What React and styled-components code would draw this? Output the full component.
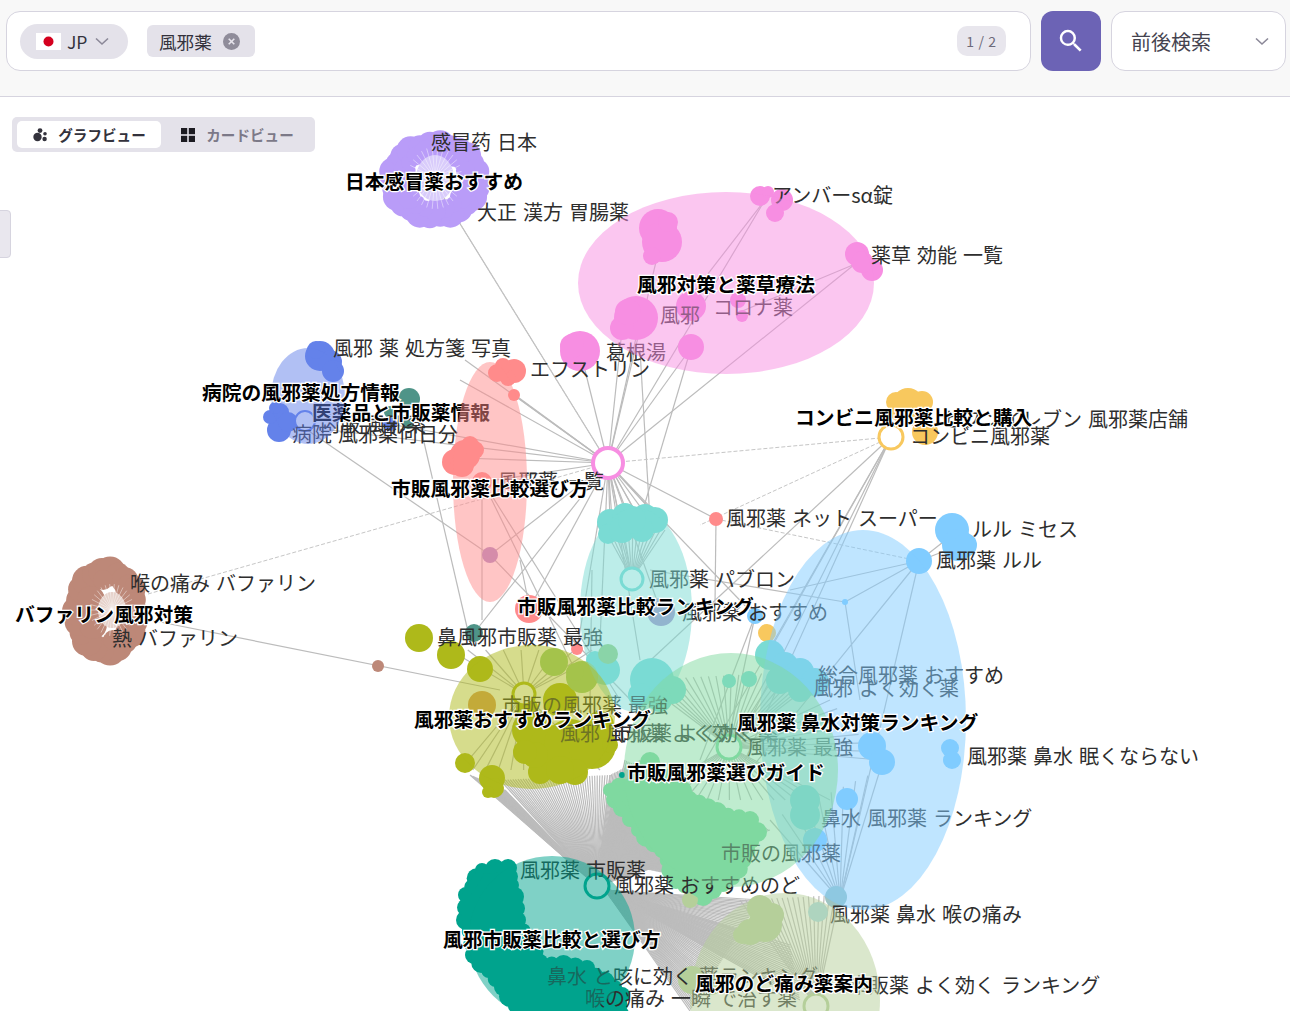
import React from "react";
import styled, { createGlobalStyle } from "styled-components";

const FONT = `"Noto Sans CJK JP", "Noto Sans", sans-serif`;

const GlobalStyle = createGlobalStyle`
  html, body { margin: 0; padding: 0; background: #fff; }
  body { font-family: ${FONT}; }
`;

// graph data, all in page coordinates
const COLORS = {
  pink: "#f78ee2",
  purple: "#b99cf8",
  salmon: "#ff8b8b",
  blue: "#6482ea",
  sky: "#80ccff",
  teal: "#7adbd4",
  dark: "#00a38d",
  olive: "#aeb91a",
  green: "#7fd9a0",
  sage: "#b5cf9a",
  brown: "#bd8878",
  yellow: "#f8c85e",
  slate: "#4f9488",
  violet: "#ab8cc8",
};

const HULLS = [
  { color: COLORS.pink, cx: 726, cy: 283, rx: 148, ry: 91 },
  { color: COLORS.salmon, cx: 490, cy: 482, rx: 37, ry: 120 },
  { color: COLORS.blue, cx: 308, cy: 396, rx: 37, ry: 48 },
  { color: COLORS.teal, cx: 636, cy: 610, rx: 56, ry: 102 },
  { color: COLORS.sky, cx: 863, cy: 720, rx: 103, ry: 190 },
  { color: COLORS.olive, cx: 532, cy: 717, rx: 83, ry: 72 },
  { color: COLORS.green, cx: 731, cy: 770, rx: 107, ry: 117 },
  { color: COLORS.dark, cx: 552, cy: 938, rx: 83, ry: 82 },
  { color: COLORS.sage, cx: 785, cy: 1000, rx: 95, ry: 107 },
];

const ring = (cx, cy, rx, ry, n, r) =>
  Array.from({ length: n }, (_, i) => {
    const a = (i / n) * Math.PI * 2;
    return [cx + Math.cos(a) * rx, cy + Math.sin(a) * ry, r + (i % 3) * 1.5];
  });

// lumps along a closed outline, gives the clusters their bumpy edge
const along = (pts, step, r) => {
  const out = [];
  pts.forEach(([x, y], i) => {
    const [nx, ny] = pts[(i + 1) % pts.length];
    const n = Math.max(1, Math.round(Math.hypot(nx - x, ny - y) / step));
    for (let k = 0; k < n; k++) {
      out.push([x + ((nx - x) * k) / n, y + ((ny - y) * k) / n, r + ((out.length * 7) % 4)]);
    }
  });
  return out;
};

const GREEN_OUTLINE = [
  [610, 790], [622, 808], [638, 830], [662, 850], [676, 880], [703, 896], [733, 878], [757, 832], [750, 820],
  [717, 812], [690, 798], [650, 762], [630, 785],
];
const DARK_OUTLINE = [
  [482, 870], [508, 868], [512, 885], [518, 920], [540, 962], [587, 968], [622, 995], [618, 1025], [527, 1025],
  [503, 987], [474, 955], [466, 920], [466, 895],
];

const BLOBS = [
  {
    color: COLORS.purple,
    dots: [...ring(435, 180, 43, 36, 26, 11), ...ring(435, 180, 32, 30, 20, 8)],
  },
  {
    color: COLORS.brown,
    dots: [...ring(106, 611, 29, 40, 22, 12), [91, 600, 14], [93, 625, 14], [103, 580, 10], [113, 640, 10], [128, 635, 8], [133, 585, 8]],
  },
  { color: COLORS.brown, dots: [[378, 666, 6]] },
  {
    color: COLORS.pink,
    dots: [
      [658, 228, 19], [662, 242, 20], [652, 256, 9], [668, 222, 10], [760, 196, 10], [782, 200, 11], [775, 213, 9], [768, 192, 6],
      [857, 254, 12], [872, 270, 11], [862, 262, 11], [636, 318, 22], [622, 328, 12], [628, 312, 13], [691, 306, 15], [691, 347, 13],
      [580, 351, 20], [572, 346, 12], [742, 316, 6], [738, 300, 8],
    ],
  },
  {
    color: COLORS.salmon,
    dots: [
      [497, 373, 9], [514, 371, 12], [508, 378, 8], [503, 366, 8], [514, 395, 6], [465, 455, 15], [455, 462, 13], [475, 450, 9],
      [470, 445, 9], [462, 465, 12], [482, 482, 10], [529, 609, 14], [577, 649, 6], [716, 519, 7],
    ],
  },
  {
    color: COLORS.blue,
    dots: [
      [320, 356, 15], [330, 362, 12], [333, 371, 11], [316, 350, 9], [280, 412, 9], [279, 430, 12], [288, 422, 10],
      [270, 417, 7], [275, 408, 6], [390, 424, 7],
    ],
  },
  { color: COLORS.slate, dots: [[409, 399, 11], [390, 412, 6], [474, 633, 9], [408, 423, 6]] },
  { color: COLORS.violet, dots: [[490, 555, 8], [661, 612, 14]] },
  {
    color: COLORS.yellow,
    dots: [
      [908, 404, 16], [896, 402, 10], [922, 402, 11], [900, 412, 10], [918, 415, 12], [925, 432, 13], [767, 633, 9],
    ],
  },
  {
    color: COLORS.teal,
    dots: [
      [610, 522, 13], [625, 516, 13], [645, 517, 13], [655, 520, 13], [608, 534, 10], [622, 530, 13], [642, 530, 12], [632, 520, 14],
      [652, 680, 22], [672, 690, 14], [640, 695, 12], [660, 700, 12], [605, 670, 15], [595, 660, 9],
      [729, 681, 7], [749, 679, 8], [770, 655, 15], [785, 665, 13], [800, 672, 14], [815, 682, 14], [780, 680, 14], [800, 690, 12], [805, 800, 15], [805, 815, 15],
    ],
  },
  { color: "#a6d8e4", dots: [[818, 912, 10]] },
  { color: "#9cc4c2", dots: [[836, 897, 11]] },
  {
    color: COLORS.sky,
    dots: [
      [952, 530, 17], [958, 545, 16], [965, 545, 12], [919, 561, 13], [950, 748, 9], [952, 760, 9], [872, 746, 14],
      [882, 762, 13], [847, 799, 11], [815, 840, 12], [755, 616, 8], [845, 602, 3],
    ],
  },
  {
    color: COLORS.olive,
    dots: [
      [419, 638, 14], [451, 655, 14], [480, 669, 13], [465, 763, 10], [492, 778, 13], [494, 788, 10], [488, 792, 6], [527, 708, 11], [560, 700, 17],
      [530, 730, 18], [550, 745, 20], [570, 745, 26], [592, 745, 24], [540, 772, 12], [575, 772, 13], [535, 755, 13], [525, 752, 12],
      [600, 725, 14], [560, 770, 14], [610, 745, 8],
    ],
  },
  { color: "#d99a58", dots: [[482, 705, 14]] },
  { color: "#9acd7c", dots: [[554, 662, 14], [582, 677, 16], [608, 654, 10], [575, 672, 9]] },
  { color: COLORS.green, dots: [...along(GREEN_OUTLINE, 11, 7)] },
  { color: COLORS.dark, dots: [[622, 802, 4], [622, 775, 3], ...along(DARK_OUTLINE, 11, 7)] },
  {
    color: COLORS.sage,
    dots: [
      [760, 908, 13], [772, 915, 12], [765, 925, 17], [750, 932, 13], [742, 935, 9], [690, 900, 8], [692, 980, 14], [712, 985, 10],
    ],
  },
];

const POLYS = [
  { color: COLORS.green, points: GREEN_OUTLINE.join(" ") },
  { color: COLORS.dark, points: DARK_OUTLINE.join(" ") },
];

const HUBS = [
  { x: 608, y: 463, r: 15, color: COLORS.pink, w: 4 },
  { x: 891, y: 437, r: 12, color: COLORS.yellow, w: 3 },
  { x: 632, y: 579, r: 11, color: COLORS.teal, w: 3 },
  { x: 524, y: 694, r: 11, color: COLORS.olive, w: 3 },
  { x: 729, y: 747, r: 12, color: COLORS.green, w: 3 },
  { x: 597, y: 886, r: 12, color: COLORS.dark, w: 3 },
  { x: 816, y: 1006, r: 12, color: COLORS.sage, w: 3 },
  { x: 305, y: 421, r: 10, color: COLORS.blue, w: 2 },
];

const fan = (x, y, targets) => targets.map(([tx, ty]) => [x, y, tx, ty]);
const span = (x1, y1, x2, y2, n) =>
  Array.from({ length: n }, (_, i) => [x1 + ((x2 - x1) * i) / (n - 1), y1 + ((y2 - y1) * i) / (n - 1)]);

const EDGES = [
  ...fan(608, 463, [
    [515, 395], [460, 380], [395, 425], [330, 430], [460, 458], [482, 482], [490, 555], [465, 360], [580, 350], [622, 330],
    [640, 320], [691, 348], [660, 245], [765, 200], [860, 260], [716, 519], [577, 649], [529, 609], [474, 633],
    [632, 579], [661, 612], [612, 520], [640, 520], [660, 520], [755, 616], [600, 640], [640, 660], [433, 180],
  ]),
  [891, 437, 700, 770], [891, 437, 720, 780], [891, 437, 745, 760], [891, 437, 640, 670], [891, 437, 770, 650],
  [919, 561, 845, 602], [845, 602, 860, 700], [919, 561, 750, 770], [919, 561, 840, 900], [919, 561, 790, 590], [716, 519, 715, 605],
  [845, 602, 650, 570], [952, 535, 919, 561], [960, 545, 919, 561],
  [150, 620, 500, 690],
  [300, 425, 490, 555], [490, 555, 650, 720], [420, 425, 470, 640], [514, 395, 608, 463], [482, 480, 482, 620],
  [482, 480, 580, 680], [482, 480, 620, 700], [520, 560, 530, 610], [755, 616, 700, 760], [755, 616, 720, 780], [592, 570, 590, 700],
  [765, 200, 680, 310], [860, 262, 740, 312], [640, 350, 650, 520], [691, 348, 640, 520],
  ...fan(632, 579, span(605, 530, 665, 530, 14)),
  ...fan(608, 463, span(610, 520, 660, 520, 6)),
  ...fan(524, 694, span(450, 650, 610, 650, 10)),
  ...fan(524, 694, span(460, 770, 600, 770, 12)),
  ...fan(729, 747, span(640, 680, 830, 670, 26)),
  ...fan(729, 747, span(640, 800, 830, 800, 18)),
  ...fan(729, 747, span(830, 700, 880, 760, 8)),
  ...fan(597, 886, span(470, 775, 505, 790, 26)),
  ...fan(597, 886, span(500, 780, 610, 775, 44)),
  ...fan(597, 886, span(610, 775, 640, 760, 20)),
  ...fan(597, 886, span(625, 760, 770, 830, 90)),
  ...fan(605, 890, span(760, 900, 690, 1011, 70)),
  ...fan(597, 886, span(790, 945, 800, 1000, 24)),
  ...fan(816, 1006, span(740, 900, 840, 895, 20)),
  ...fan(615, 790, span(600, 860, 700, 880, 110)),
  ...fan(640, 775, span(600, 860, 720, 880, 110)),
  ...fan(840, 900, span(770, 820, 880, 770, 10)),
];

// thin dashed links between far clusters
const FAINT_EDGES = [
  [148, 594, 608, 463],
  [608, 463, 891, 437],
  [433, 180, 608, 463],
  [716, 519, 919, 561],
  [891, 437, 700, 525],
];

// pale centres with spokes inside the clusters
const HOLES = [
  { cx: 435, cy: 178, rx: 19, ry: 23, color: "#d9ccfb" },
  { cx: 112, cy: 610, rx: 14, ry: 18, color: "#e6d2cb" },
];
const SPOKES = HOLES.flatMap((h) => fan(h.cx, h.cy, ring(h.cx, h.cy, h.rx + 8, h.ry + 8, 30, 0).map(([x, y]) => [x, y])));

const LABELS = [
  ["感冒药 日本", 431, 141],
  ["大正 漢方 胃腸薬", 477, 211],
  ["アンバーsα錠", 772, 194],
  ["薬草 効能 一覧", 871, 254],
  ["風邪", 660, 314],
  ["コロナ薬", 713, 306],
  ["葛根湯", 606, 351],
  ["エフストリン", 530, 368],
  ["風邪 薬 処方箋 写真", 333, 347],
  ["内服 風邪薬", 320, 423],
  ["病院 風邪薬何日分", 292, 433],
  ["セブンイレブン 風邪薬店舗", 942, 418],
  ["コンビニ風邪薬", 910, 435],
  ["風邪薬 一覧", 498, 480],
  ["風邪薬 ネット スーパー", 726, 517],
  ["ルル ミセス", 972, 528],
  ["風邪薬 ルル", 936, 559],
  ["風邪薬 パブロン", 649, 578],
  ["喉の痛み バファリン", 130, 582],
  ["風邪薬 おすすめ", 682, 611],
  ["熱 バファリン", 112, 637],
  ["鼻風邪市販薬 最強", 437, 636],
  ["総合風邪薬 おすすめ", 818, 674],
  ["風邪 よく効く薬", 813, 687],
  ["市販の風邪薬 最強", 502, 704],
  ["風邪 風邪薬 よく効く", 560, 732],
  ["市販薬 よく効く薬", 612, 732],
  ["風邪薬 最強", 747, 746],
  ["風邪薬 鼻水 眠くならない", 967, 755],
  ["鼻水 風邪薬 ランキング", 821, 817],
  ["市販の風邪薬", 721, 852],
  ["風邪薬 市販薬", 520, 869],
  ["風邪薬 おすすめのど", 614, 884],
  ["風邪薬 鼻水 喉の痛み", 830, 913],
  ["鼻水 と咳に効く 薬ランキング", 547, 975],
  ["市販薬 よく効く ランキング", 849, 984],
  ["喉の痛み 一瞬 で治す薬", 585, 997],
];

const UNDER_TITLES = [["医薬品と市販薬情報", 312, 411]];

const TITLES = [
  ["病院の風邪薬処方情報", 202, 391],
  ["日本感冒薬おすすめ", 345, 180],
  ["風邪対策と薬草療法", 637, 283],
  ["コンビニ風邪薬比較と購入", 795, 416],
  ["市販風邪薬比較選び方", 391, 487],
  ["市販風邪薬比較ランキング", 517, 605],
  ["バファリン風邪対策", 15, 613],
  ["風邪薬おすすめランキング", 414, 718],
  ["風邪薬 鼻水対策ランキング", 737, 721],
  ["市販風邪薬選びガイド", 627, 771],
  ["風邪市販薬比較と選び方", 443, 938],
  ["風邪のど痛み薬案内", 695, 982],
];

const Chevron = ({ size = 16 }) => (
  <svg width={size} height={size} viewBox="0 0 16 16" fill="none" stroke="#8b8898" strokeWidth="1.6">
    <path d="M2 5.5 8 11l6-5.5" />
  </svg>
);

export default function App() {
  return (
    <Page>
      <GlobalStyle />
      <Header>
        <SearchBox>
          <CountryPill>
            <Flag>
              <svg width="25" height="17" viewBox="0 0 25 17">
                <rect width="25" height="17" fill="#fff" />
                <circle cx="12.5" cy="8.5" r="5" fill="#d4001e" />
              </svg>
            </Flag>
            JP
            <Chevron />
          </CountryPill>
          <KeywordTag>
            風邪薬
            <svg width="17" height="17" viewBox="0 0 17 17">
              <circle cx="8.5" cy="8.5" r="8.5" fill="#8f8c9a" />
              <path d="M5.7 5.7l5.6 5.6M11.3 5.7l-5.6 5.6" stroke="#e6e4ec" strokeWidth="1.6" />
            </svg>
          </KeywordTag>
          <Counter>1 / 2</Counter>
        </SearchBox>
        <SearchButton aria-label="検索">
          <svg width="30" height="30" viewBox="0 0 24 24" fill="#fff">
            <path d="M15.5 14h-.79l-.28-.27A6.471 6.471 0 0 0 16 9.5 6.5 6.5 0 1 0 9.5 16c1.61 0 3.09-.59 4.23-1.57l.27.28v.79l5 4.99L20.49 19l-4.99-5zm-6 0C7.01 14 5 11.99 5 9.5S7.01 5 9.5 5 14 7.01 14 9.5 11.99 14 9.5 14z" />
          </svg>
        </SearchButton>
        <ModeSelect>
          前後検索
          <Chevron />
        </ModeSelect>
      </Header>
      <Canvas>
        <GraphSvg viewBox="0 97 1290 914">
          {EDGES.map(([x1, y1, x2, y2], i) => (
            <Edge key={i} x1={x1} y1={y1} x2={x2} y2={y2} />
          ))}
          {FAINT_EDGES.map(([x1, y1, x2, y2], i) => (
            <FaintEdge key={i} x1={x1} y1={y1} x2={x2} y2={y2} />
          ))}
          {BLOBS.map((b, i) => (
            <g key={i} fill={b.color}>
              {b.dots.map(([x, y, r], j) => (
                <circle key={j} cx={x} cy={y} r={r} />
              ))}
            </g>
          ))}
          {POLYS.map((p, i) => (
            <Poly key={i} points={p.points} fill={p.color} stroke={p.color} />
          ))}
          {HOLES.map((h) => (
            <ellipse key={h.cx} cx={h.cx} cy={h.cy} rx={h.rx} ry={h.ry} fill={h.color} />
          ))}
          {SPOKES.map(([x1, y1, x2, y2], i) => (
            <Spoke key={i} x1={x1} y1={y1} x2={x2} y2={y2} />
          ))}
          {HUBS.map((h) => (
            <circle key={h.x} cx={h.x} cy={h.y} r={h.r} fill="#fff" stroke={h.color} strokeWidth={h.w} />
          ))}
          {LABELS.map(([text, x, y]) => (
            <NodeLabel key={text + x} x={x} y={y}>
              {text}
            </NodeLabel>
          ))}
          {UNDER_TITLES.map(([text, x, y]) => (
            <ClusterTitle key={text} x={x} y={y}>
              {text}
            </ClusterTitle>
          ))}
          {HULLS.map((h) => (
            <Hull key={h.cx} cx={h.cx} cy={h.cy} rx={h.rx} ry={h.ry} fill={h.color} />
          ))}
          {TITLES.map(([text, x, y]) => (
            <ClusterTitle key={text} x={x} y={y}>
              {text}
            </ClusterTitle>
          ))}
        </GraphSvg>
        <ViewToggle>
          <ViewTab $active>
            <svg width="16" height="16" viewBox="0 0 16 16" fill="#33323c">
              <circle cx="5.5" cy="10" r="4.2" />
              <circle cx="8" cy="3.6" r="2.4" />
              <circle cx="13" cy="6.8" r="1.8" />
              <circle cx="12.6" cy="12" r="2.2" />
            </svg>
            グラフビュー
          </ViewTab>
          <ViewTab>
            <svg width="16" height="16" viewBox="0 0 16 16" fill="#1c1b22">
              <rect x="1" y="1" width="6.2" height="6.2" />
              <rect x="8.8" y="1" width="6.2" height="6.2" />
              <rect x="1" y="8.8" width="6.2" height="6.2" />
              <rect x="8.8" y="8.8" width="6.2" height="6.2" />
            </svg>
            カードビュー
          </ViewTab>
        </ViewToggle>
        <SideHandle />
      </Canvas>
    </Page>
  );
}

const Page = styled.div`
  width: 1290px;
  height: 1011px;
  display: flex;
  flex-direction: column;
  overflow: hidden;
  font-family: ${FONT};
  color: #33323c;
`;
const Header = styled.header`
  height: 97px;
  box-sizing: border-box;
  display: flex;
  align-items: flex-start;
  gap: 10px;
  padding: 11px 4px 0 6px;
  background: #f8f8f8;
  border-bottom: 1px solid #d6d4df;
`;
const SearchBox = styled.div`
  flex: 1;
  height: 60px;
  box-sizing: border-box;
  display: flex;
  align-items: center;
  gap: 19px;
  padding: 0 24px 0 13px;
  background: #fff;
  border: 1px solid #d6d4df;
  border-radius: 14px;
`;
const CountryPill = styled.div`
  display: flex;
  align-items: center;
  gap: 7px;
  width: 108px;
  height: 35px;
  box-sizing: border-box;
  padding: 0 14px 0 16px;
  background: #e4e2ea;
  border-radius: 18px;
  font-size: 17.5px;
`;
const Flag = styled.span`
  display: flex;
  margin-right: -1px;
`;
const KeywordTag = styled.div`
  display: flex;
  align-items: center;
  gap: 11px;
  width: 108px;
  height: 32px;
  box-sizing: border-box;
  padding: 0 14px 0 12px;
  background: #e4e2ea;
  border-radius: 6px;
  font-size: 17.6px;
`;
const Counter = styled.div`
  margin-left: auto;
  display: flex;
  align-items: center;
  justify-content: center;
  width: 49px;
  height: 30px;
  background: #e8e6ed;
  border-radius: 10px;
  font-size: 14px;
  letter-spacing: 0.6px;
  color: #6d6a7a;
`;
const SearchButton = styled.button`
  width: 60px;
  height: 60px;
  display: flex;
  align-items: center;
  justify-content: center;
  padding: 0;
  background: #6c63b5;
  border: none;
  border-radius: 12px;
`;
const ModeSelect = styled.div`
  width: 175px;
  height: 60px;
  box-sizing: border-box;
  display: flex;
  align-items: center;
  justify-content: space-between;
  padding: 0 15px 0 19px;
  background: #fff;
  border: 1px solid #d6d4df;
  border-radius: 14px;
  font-size: 20px;
  color: #45434f;
`;
const Canvas = styled.main`
  position: relative;
  flex: 1;
  background: #fff;
`;
const GraphSvg = styled.svg`
  display: block;
  width: 1290px;
  height: 914px;
`;
const Edge = styled.line`
  stroke: #bcbcbc;
  stroke-width: 1.2;
`;
const FaintEdge = styled.line`
  stroke: #c6c6c6;
  stroke-width: 1;
  stroke-dasharray: 4 2;
`;
const Spoke = styled.line`
  stroke: #fff;
  stroke-width: 0.8;
  opacity: 0.55;
`;
const Poly = styled.polygon`
  stroke-width: 8;
  stroke-linejoin: round;
`;
const Hull = styled.ellipse`
  opacity: 0.5;
`;
const NodeLabel = styled.text`
  font-family: ${FONT};
  font-size: 20px;
  word-spacing: 1.5px;
  fill: #2e2e2e;
  dominant-baseline: central;
`;
const ClusterTitle = styled.text`
  font-family: ${FONT};
  font-size: 19.8px;
  font-weight: 700;
  fill: #000;
  stroke: #fff;
  stroke-width: 2.5px;
  paint-order: stroke;
  dominant-baseline: central;
`;
const ViewToggle = styled.div`
  position: absolute;
  left: 12px;
  top: 20px;
  width: 303px;
  height: 35px;
  box-sizing: border-box;
  display: flex;
  align-items: center;
  gap: 4px;
  padding: 0 5px;
  background: #e4e2ea;
  border-radius: 5px;
`;
const ViewTab = styled.div`
  width: 144px;
  height: 27px;
  display: flex;
  align-items: center;
  justify-content: center;
  gap: 10px;
  border-radius: 5px;
  font-size: 14.6px;
  font-weight: 700;
  background: ${(p) => (p.$active ? "#fff" : "transparent")};
  color: ${(p) => (p.$active ? "#33323c" : "#7c7988")};
`;
const SideHandle = styled.div`
  position: absolute;
  left: -1px;
  top: 113px;
  width: 12px;
  height: 48px;
  box-sizing: border-box;
  background: #e9e7ee;
  border: 1px solid #d6d4df;
  border-radius: 0 4px 4px 0;
`;
